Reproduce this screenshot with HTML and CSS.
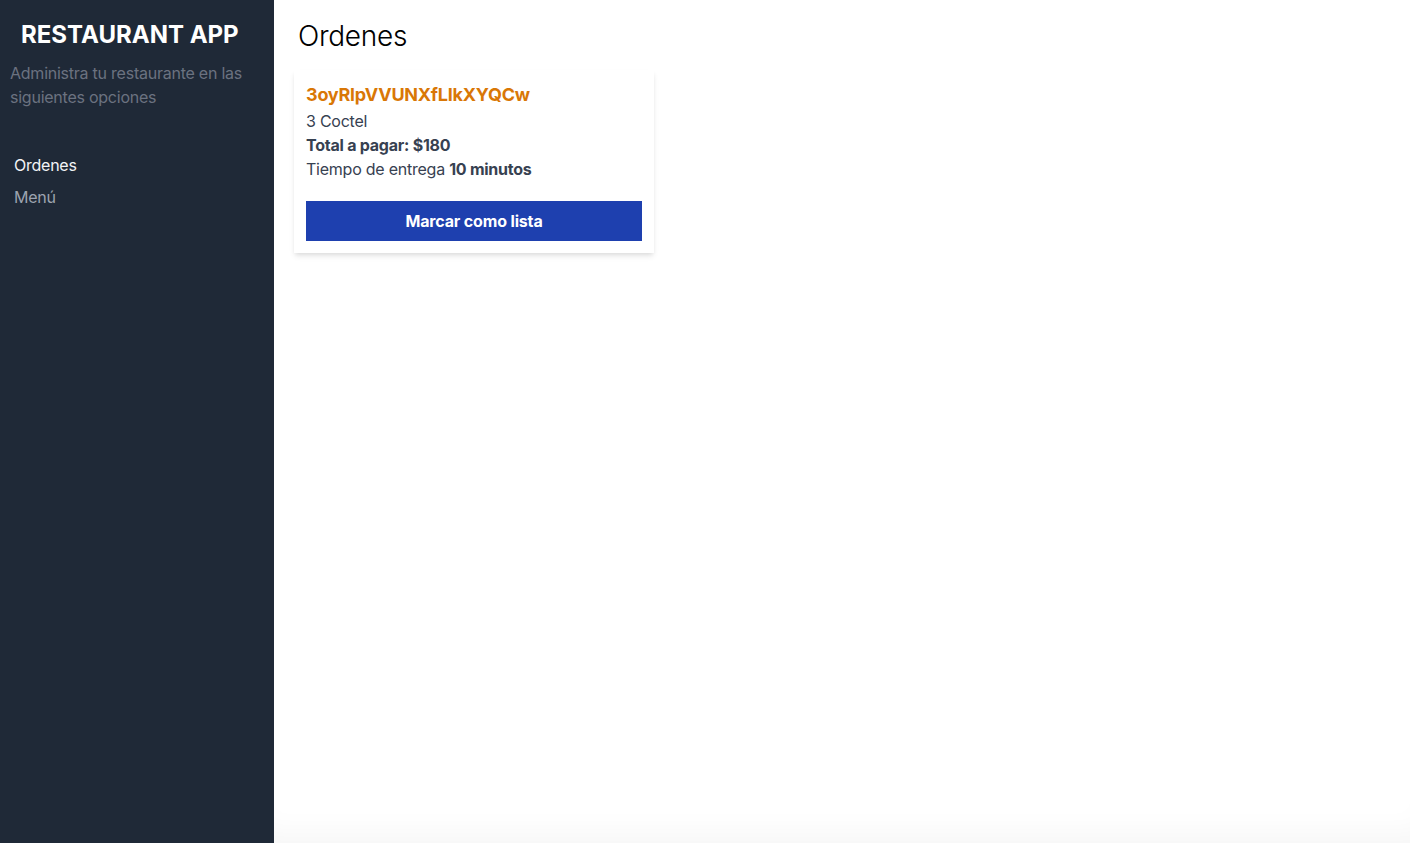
FILE: index.html
```html
<!DOCTYPE html>
<html lang="es">
<head>
<meta charset="utf-8">
<title>Restaurant App</title>
<link rel="stylesheet" href="styles.css">
</head>
<body>
<div class="layout">
  <aside class="sidebar">
    <h1 class="brand">Restaurant App</h1>
    <p class="tagline">Administra tu restaurante en las siguientes opciones</p>
    <nav class="nav">
      <a class="nav-link active" href="#">Ordenes</a>
      <a class="nav-link" href="#">Menú</a>
    </nav>
  </aside>
  <main class="main">
    <h2 class="page-title">Ordenes</h2>
    <div class="orders">
      <div class="card">
        <p class="order-id">3oyRlpVVUNXfLIkXYQCw</p>
        <p class="line">3 Coctel</p>
        <p class="line strong">Total a pagar: $180</p>
        <p class="line">Tiempo de entrega <strong>10 minutos</strong></p>
        <button class="btn">Marcar como lista</button>
      </div>
    </div>
  </main>
</div>
</body>
</html>
```

FILE: styles.css
```css
* { box-sizing: border-box; }
html, body { margin: 0; padding: 0; height: 100%; }
body {
  font-family: Inter, "Noto Sans", "Liberation Sans", sans-serif;
  color: #374151;
  background: #fff;
  letter-spacing: -0.015em;
}
.layout {
  display: flex;
  min-height: 100vh;
}
.sidebar {
  width: 274px;
  flex-shrink: 0;
  background: #1f2937;
  padding: 19px 10px 0 10px;
}
.brand {
  margin: 0;
  padding-left: 11px;
  font-size: 24px;
  line-height: 32px;
  font-weight: 700;
  letter-spacing: 0;
  text-transform: uppercase;
  color: #fff;
}
.tagline {
  margin: 10px 0 0 0;
  font-size: 16px;
  line-height: 24px;
  color: #6b7280;
  width: 240px;
}
.nav {
  display: flex;
  flex-direction: column;
  margin-top: 44px;
  padding-left: 4px;
  gap: 8px;
}
.nav-link {
  text-decoration: none;
  font-size: 16px;
  line-height: 24px;
  color: #9ca3af;
}
.nav-link.active { color: #f3f4f6; }
.main {
  flex: 1;
  padding: 18px 20px;
  box-shadow: inset 0 -30px 30px -20px rgba(0,0,0,0.04);
}
.page-title {
  margin: 0 0 16px 4px;
  font-size: 28px;
  line-height: 36px;
  font-weight: 300;
  letter-spacing: -0.01em;
  color: #000;
}
.orders {
  display: flex;
  flex-wrap: wrap;
  gap: 16px;
}
.card {
  width: 360px;
  padding: 11px 12px 12px;
  background: #fff;
  box-shadow: 0 4px 6px -1px rgba(0,0,0,0.1), 0 2px 4px -1px rgba(0,0,0,0.06);
}
.order-id {
  margin: 0;
  font-size: 18px;
  line-height: 28px;
  font-weight: 700;
  color: #d97706;
}
.line {
  margin: 0;
  font-size: 16px;
  line-height: 24px;
  color: #374151;
}
.line.strong, .line strong { font-weight: 700; }
.btn {
  display: block;
  width: 100%;
  margin-top: 20px;
  height: 40px;
  border: 0;
  background: #1e40af;
  color: #fff;
  font-family: inherit;
  font-size: 16px;
  font-weight: 700;
  letter-spacing: -0.01em;
  cursor: pointer;
}
```
